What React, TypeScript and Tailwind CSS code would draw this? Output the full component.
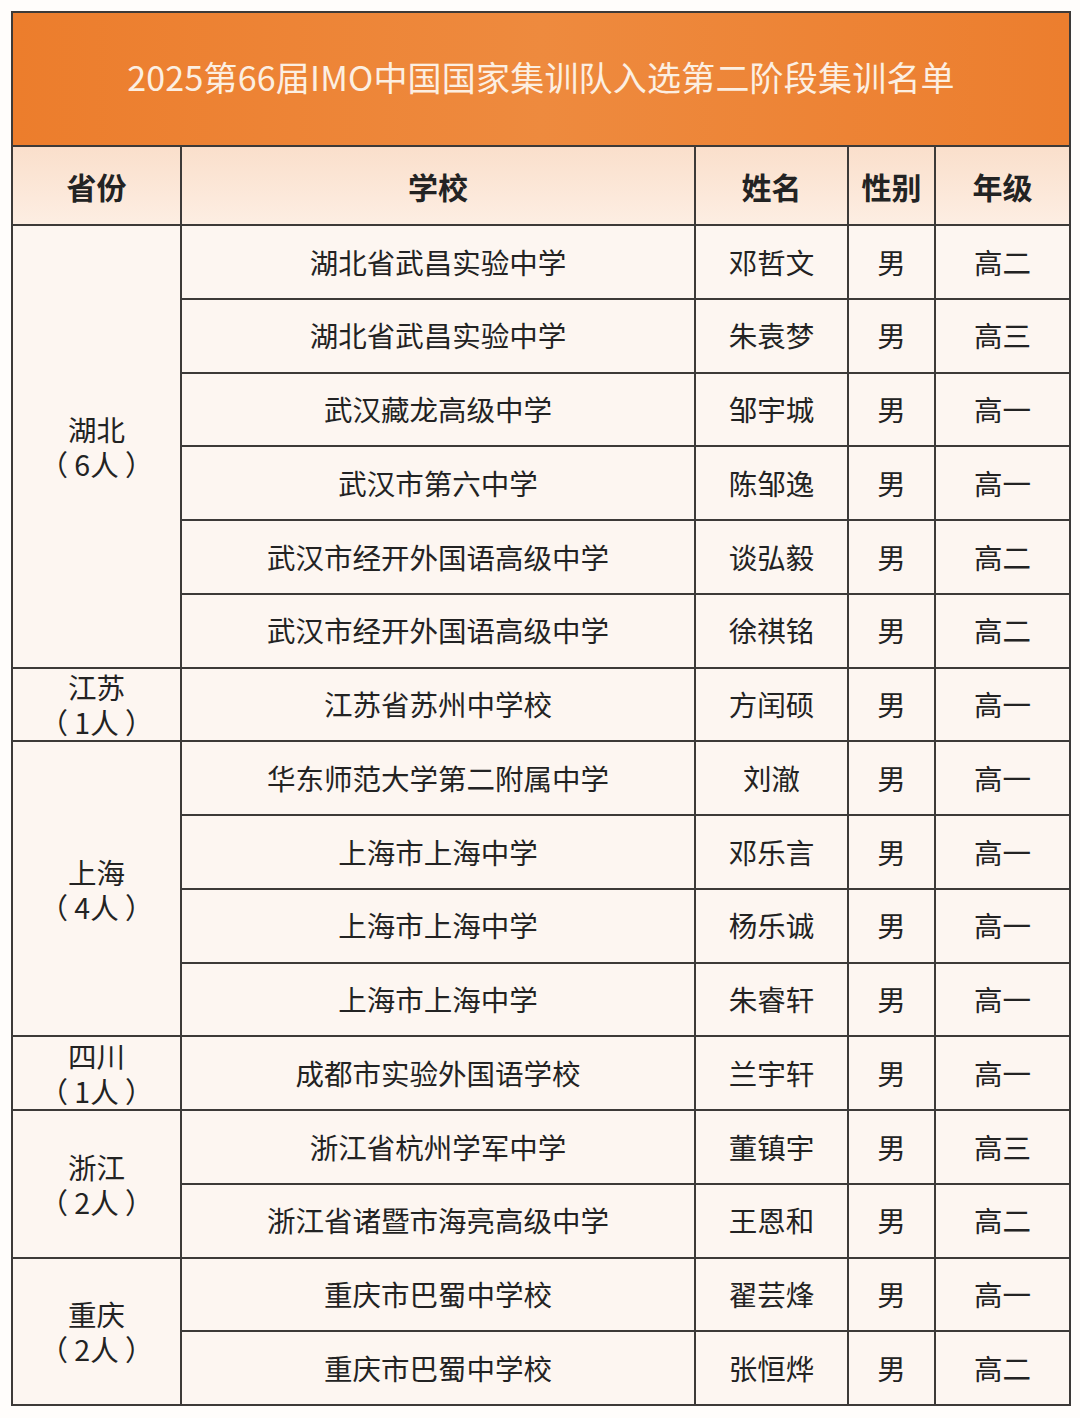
const groups = [
  {
    province: '湖北',
    count: '（ 6人 ）',
    rows: [
      ['湖北省武昌实验中学', '邓哲文', '男', '高二'],
      ['湖北省武昌实验中学', '朱袁梦', '男', '高三'],
      ['武汉藏龙高级中学', '邹宇城', '男', '高一'],
      ['武汉市第六中学', '陈邹逸', '男', '高一'],
      ['武汉市经开外国语高级中学', '谈弘毅', '男', '高二'],
      ['武汉市经开外国语高级中学', '徐祺铭', '男', '高二'],
    ],
  },
  {
    province: '江苏',
    count: '（ 1人 ）',
    rows: [['江苏省苏州中学校', '方闰硕', '男', '高一']],
  },
  {
    province: '上海',
    count: '（ 4人 ）',
    rows: [
      ['华东师范大学第二附属中学', '刘澈', '男', '高一'],
      ['上海市上海中学', '邓乐言', '男', '高一'],
      ['上海市上海中学', '杨乐诚', '男', '高一'],
      ['上海市上海中学', '朱睿轩', '男', '高一'],
    ],
  },
  {
    province: '四川',
    count: '（ 1人 ）',
    rows: [['成都市实验外国语学校', '兰宇轩', '男', '高一']],
  },
  {
    province: '浙江',
    count: '（ 2人 ）',
    rows: [
      ['浙江省杭州学军中学', '董镇宇', '男', '高三'],
      ['浙江省诸暨市海亮高级中学', '王恩和', '男', '高二'],
    ],
  },
  {
    province: '重庆',
    count: '（ 2人 ）',
    rows: [
      ['重庆市巴蜀中学校', '翟芸烽', '男', '高一'],
      ['重庆市巴蜀中学校', '张恒烨', '男', '高二'],
    ],
  },
];

const cell = 'border-2 border-[#3d3a38] p-0 text-center align-middle';
const headers = ['省份', '学校', '姓名', '性别', '年级'];

export default function App() {
  return (
    <div
      className="min-h-[1418px] w-[1080px] bg-[#fffdfb] pt-[11px] pl-[11px]"
      style={{ fontFamily: '"Noto Sans CJK SC", "Noto Sans", sans-serif' }}
    >
      <table className="w-[1058px] table-fixed border-collapse text-[28.5px] leading-none text-[#232323] [text-spacing-trim:space-all]">
        <colgroup>
          <col className="w-[169px]" />
          <col className="w-[514px]" />
          <col className="w-[153px]" />
          <col className="w-[87px]" />
          <col className="w-[135px]" />
        </colgroup>
        <thead>
          <tr className="h-[134px]">
            <th
              colSpan={5}
              className={`${cell} bg-gradient-to-r from-[#ec7d2c] via-[#ee8a3e] to-[#ec7e2e] pb-[4px] text-[34px] font-normal tracking-[0.2px] text-[#fcefe2]`}
            >
              2025第66届IMO中国国家集训队入选第二阶段集训名单
            </th>
          </tr>
          <tr className="h-[79px] bg-gradient-to-b from-[#fadfcb] to-[#fdeee3]">
            {headers.map((h) => (
              <th key={h} className={`${cell} text-[30px] font-bold`}>
                {h}
              </th>
            ))}
          </tr>
        </thead>
        <tbody className="bg-[#fdf6f1]">
          {groups.map((g) =>
            g.rows.map((r, i) => (
              <tr key={g.province + i} className="h-[73.75px]">
                {i === 0 && (
                  <td rowSpan={g.rows.length} className={`${cell} leading-[35px]`}>
                    <div>{g.province}</div>
                    <div className="whitespace-pre">{g.count}</div>
                  </td>
                )}
                {r.map((v, j) => (
                  <td key={j} className={cell}>
                    {v}
                  </td>
                ))}
              </tr>
            ))
          )}
        </tbody>
      </table>
    </div>
  );
}
